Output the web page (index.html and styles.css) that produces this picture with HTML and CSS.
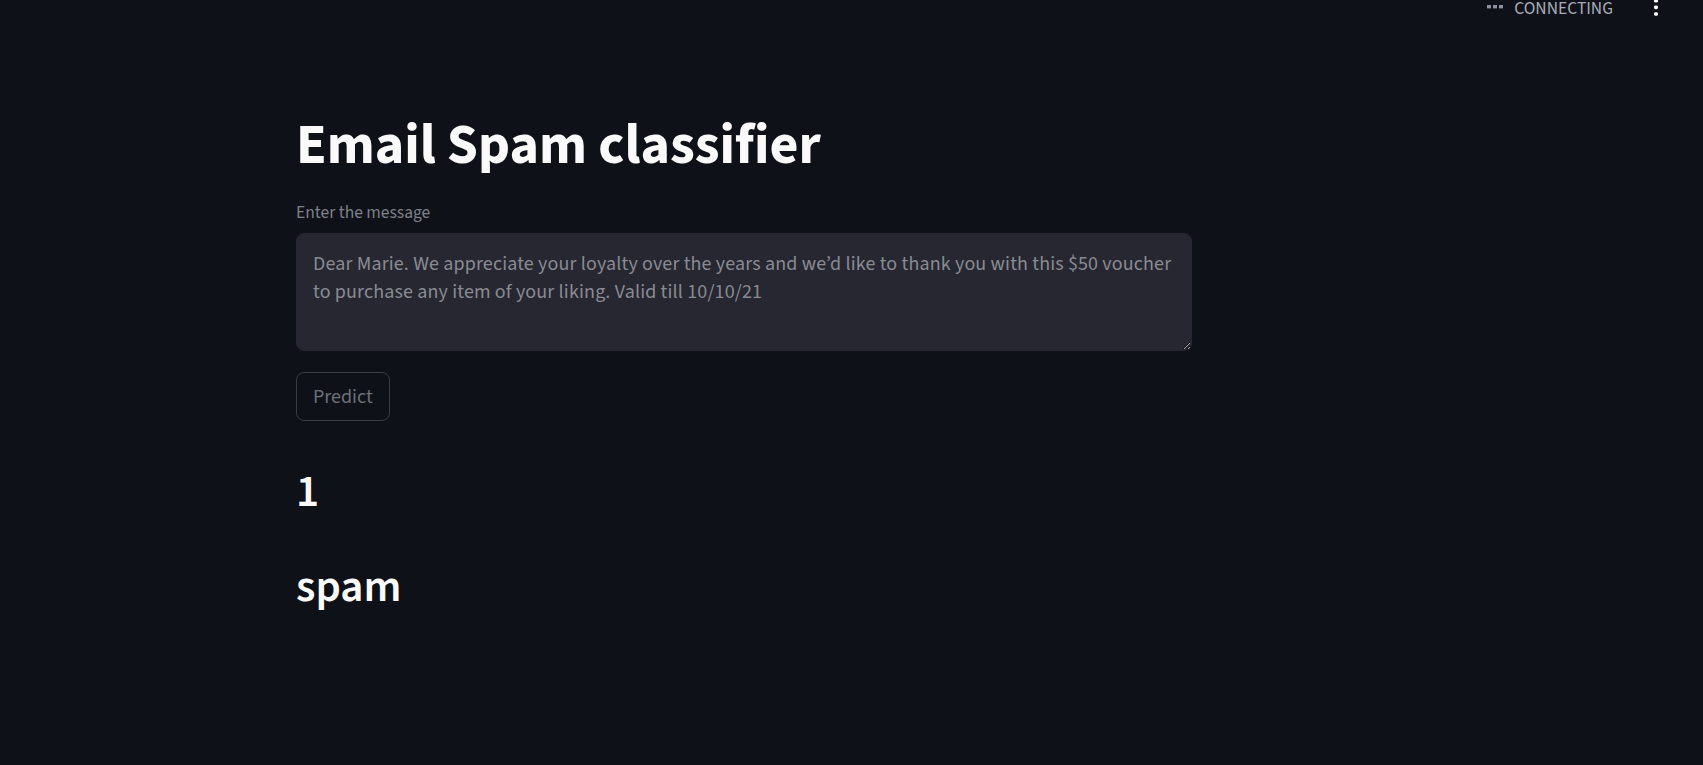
FILE: index.html
```html
<!DOCTYPE html>
<html lang="en">
<head>
<meta charset="utf-8">
<title>Email Spam classifier</title>
<link rel="stylesheet" href="styles.css">
</head>
<body>
<header class="topbar">
  <div class="status">
    <svg class="status-icon" width="16" height="4" viewBox="0 0 16 4" aria-hidden="true">
      <rect x="0" y="0" width="4" height="3.4" fill="#8d909a"/>
      <rect x="6" y="0" width="4" height="3.4" fill="#8d909a"/>
      <rect x="12" y="0" width="4" height="3.4" fill="#8d909a"/>
    </svg>
    <span class="status-text">CONNECTING</span>
  </div>
  <button class="menu" aria-label="Main menu">
    <svg width="4" height="17" viewBox="0 0 4 17" aria-hidden="true">
      <rect x="0" y="0" width="4" height="3.6" rx="1.4" fill="#fafafa"/>
      <rect x="0" y="6.6" width="4" height="3.6" rx="1.4" fill="#fafafa"/>
      <rect x="0" y="13.2" width="4" height="3.6" rx="1.4" fill="#fafafa"/>
    </svg>
  </button>
</header>
<main class="main">
  <h1 class="title">Email Spam classifier</h1>
  <label class="field-label" for="msg">Enter the message</label>
  <textarea id="msg" class="message">Dear Marie. We appreciate your loyalty over the years and we’d like to thank you with this $50 voucher to purchase any item of your liking. Valid till 10/10/21</textarea>
  <button class="predict">Predict</button>
  <h2 class="result result-num">1</h2>
  <h2 class="result result-label">spam</h2>
</main>
</body>
</html>
```
FILE: styles.css
```css
html, body {
  margin: 0;
  padding: 0;
  background: #0e1117;
  color: #fafafa;
  font-family: "Source Sans 3", "Source Sans Pro", Lato, sans-serif;
}
body {
  height: 765px;
  overflow: hidden;
}
.topbar {
  display: flex;
  justify-content: flex-end;
  align-items: flex-start;
  height: 20px;
}
.status {
  display: flex;
  align-items: flex-start;
  margin-right: 41px;
}
.status-icon {
  margin-top: 5px;
  margin-right: 11px;
  display: block;
}
.status-text {
  font-size: 17.5px;
  line-height: 17px;
  color: #a6abb8;
  display: block;
}
.menu {
  background: none;
  border: 0;
  padding: 0;
  margin: -1px 45px 0 0;
  display: block;
}
.menu svg { display: block; }
.main {
  display: flex;
  flex-direction: column;
  align-items: flex-start;
  width: 896px;
  margin-left: 296px;
  padding-top: 92px;
}
.title {
  margin: 0;
  font-size: 56px;
  font-weight: 700;
  line-height: 67px;
  color: #fafafa;
}
.field-label {
  margin-top: 23px;
  font-size: 17.5px;
  line-height: 22px;
  height: 22px;
  color: #7f8189;
}
.message {
  margin-top: 9px;
  box-sizing: border-box;
  width: 896px;
  height: 118px;
  background: #262730;
  border: 1px solid #262730;
  border-radius: 8px;
  padding: 16px 16px;
  font-family: inherit;
  font-size: 20px;
  line-height: 28px;
  letter-spacing: 0.15px;
  color: #898b93;
  resize: vertical;
  color-scheme: dark;
  outline: none;
}
.predict {
  margin-top: 21px;
  box-sizing: border-box;
  height: 49px;
  padding: 0 16px;
  background: transparent;
  border: 1px solid #3a3c44;
  border-radius: 8px;
  font-family: inherit;
  font-size: 20px;
  color: #6d7078;
}
.result {
  margin: 0;
  font-size: 45px;
  font-weight: 600;
  line-height: 54px;
  color: #fafafa;
}
.result-num {
  margin-top: 44px;
}
.result-label {
  margin-top: 41px;
}
```
